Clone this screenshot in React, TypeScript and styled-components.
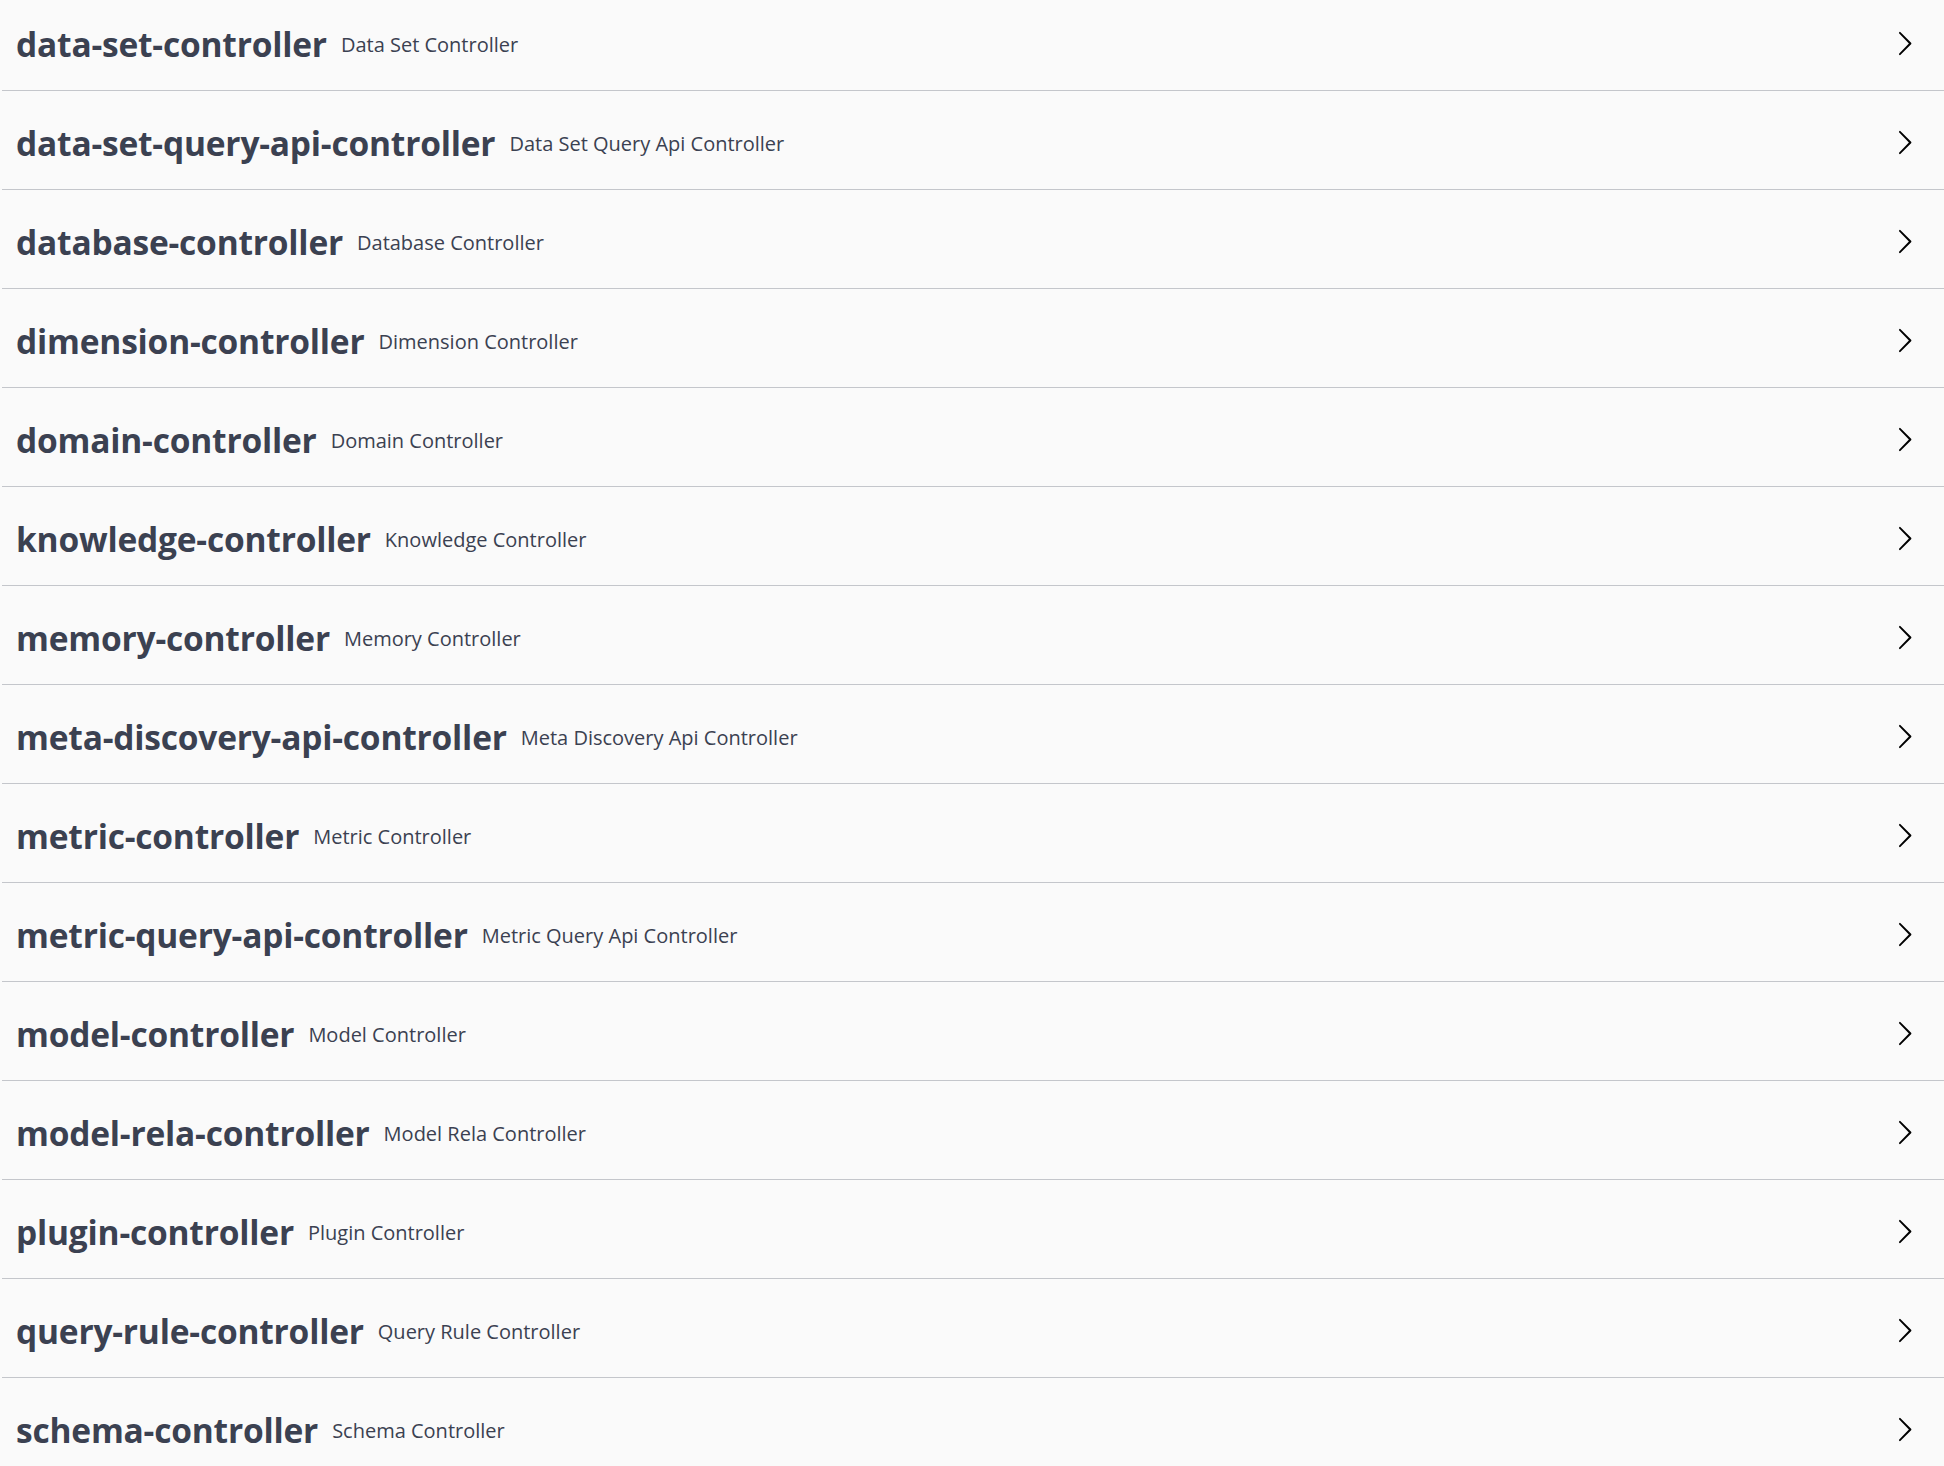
import React from 'react';
import styled, { createGlobalStyle } from 'styled-components';

const GlobalStyle = createGlobalStyle`
  html, body {
    margin: 0;
    padding: 0;
    background: #fafafa;
  }
  body {
    font-family: "Open Sans", "Noto Sans", sans-serif;
    color: #3b4151;
    overflow: hidden;
  }
`

const List = styled.div`
  display: flex;
  flex-direction: column;
  margin-top: -3px;
  margin-left: 2px;
`

const TagRow = styled.div`
  display: flex;
  align-items: center;
  height: 93px;
  margin-bottom: 5px;
  padding: 0 26px 0 14px;
  border-bottom: 1px solid rgba(59, 65, 81, 0.28);
  cursor: pointer;
`

const TagName = styled.span`
  font-size: 33.5px;
  font-weight: 700;
  letter-spacing: -0.2px;
  color: #3b4151;
  white-space: nowrap;
`

const TagDesc = styled.small`
  flex: 1;
  padding: 2px 14px 0;
  font-size: 20px;
  font-weight: 400;
  color: #3b4151;
  white-space: nowrap;
`

const Arrow = styled.svg`
  width: 27px;
  height: 27px;
  flex-shrink: 0;
  fill: #000;
`

const tags = [
  ['data-set-controller', 'Data Set Controller'],
  ['data-set-query-api-controller', 'Data Set Query Api Controller'],
  ['database-controller', 'Database Controller'],
  ['dimension-controller', 'Dimension Controller'],
  ['domain-controller', 'Domain Controller'],
  ['knowledge-controller', 'Knowledge Controller'],
  ['memory-controller', 'Memory Controller'],
  ['meta-discovery-api-controller', 'Meta Discovery Api Controller'],
  ['metric-controller', 'Metric Controller'],
  ['metric-query-api-controller', 'Metric Query Api Controller'],
  ['model-controller', 'Model Controller'],
  ['model-rela-controller', 'Model Rela Controller'],
  ['plugin-controller', 'Plugin Controller'],
  ['query-rule-controller', 'Query Rule Controller'],
  ['schema-controller', 'Schema Controller'],
];

function App() {
  return (
    <>
      <GlobalStyle />
      <List>
        {tags.map(([name, desc]) => (
          <TagRow key={name}>
            <TagName>{name}</TagName>
            <TagDesc>{desc}</TagDesc>
            <Arrow viewBox="0 0 20 20" aria-hidden="true">
              <path d="M13.25 10L6.109 2.58a.697.697 0 0 1 0-.979.68.68 0 0 1 .969 0l7.83 7.908a.697.697 0 0 1 0 .979l-7.83 7.908a.68.68 0 0 1-.969 0 .697.697 0 0 1 0-.979L13.25 10z" />
            </Arrow>
          </TagRow>
        ))}
      </List>
    </>
  );
}

export default App;
